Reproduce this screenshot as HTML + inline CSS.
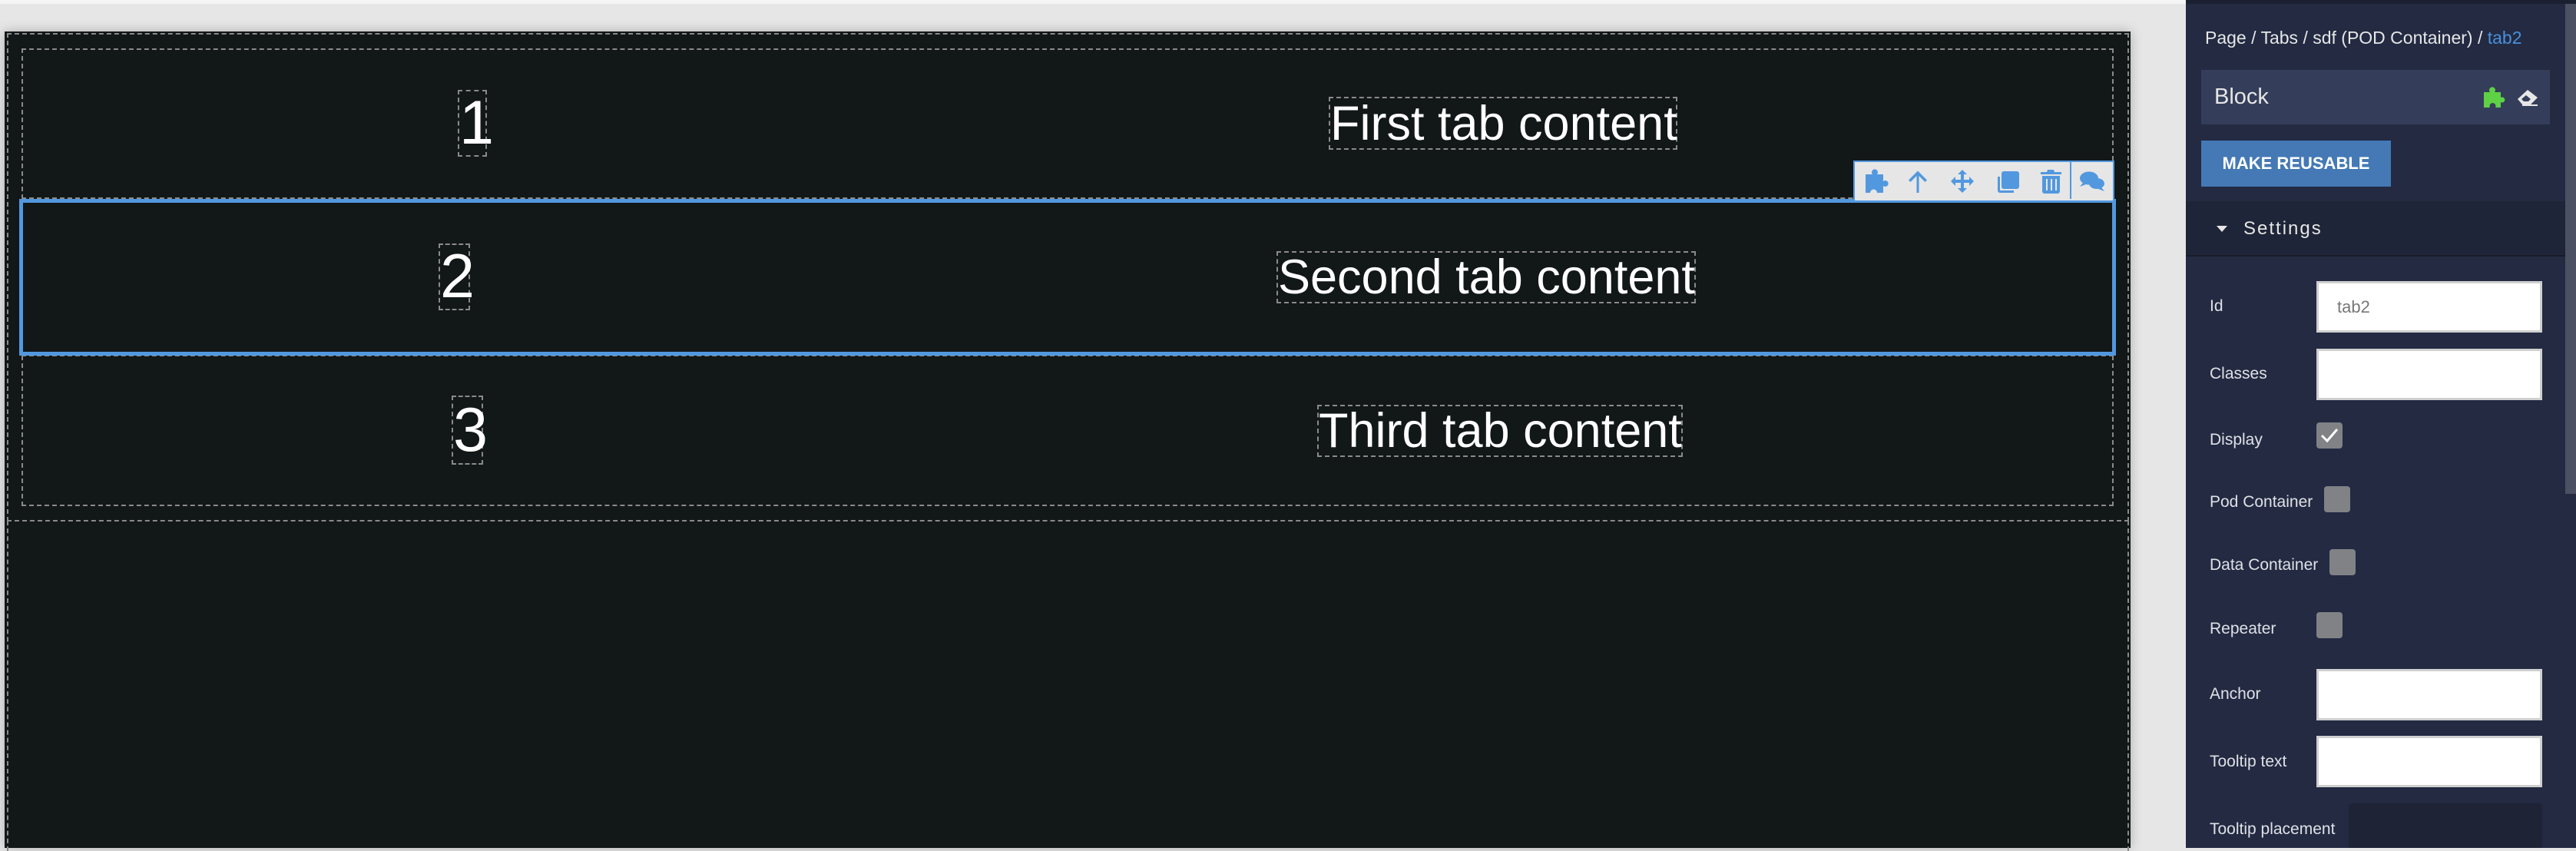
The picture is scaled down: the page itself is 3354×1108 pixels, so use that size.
<!DOCTYPE html>
<html><head><meta charset="utf-8"><style>
*{margin:0;padding:0;box-sizing:border-box}
body{width:3354px;height:1104px;overflow:hidden;background:#e6e6e6;font-family:"Liberation Sans",Arial,sans-serif;position:relative}
.a{position:absolute}
.dash{position:absolute;border:2px dashed #8a8a8a}
.t{position:absolute;color:#fff;border:2px dashed #8a8a8a;white-space:nowrap;text-align:center}
.lbl{position:absolute;left:2877px;color:#dfe1e6;font-size:21px;transform:translateY(-50%)}
.inp{position:absolute;left:3016px;width:294px;height:67px;background:#fff;border:3px solid #cfcfcf}
.cb{position:absolute;width:34px;height:34px;background:#808285;border-radius:4px}
</style></head><body>
<div class="a" style="left:0;top:0;width:2846px;height:5px;background:#f4f4f4"></div>
<!-- canvas -->
<div class="a" style="left:6px;top:41px;width:2768px;height:1063px;background:#121718;box-shadow:0 0 14px rgba(0,0,0,.25)"></div>
<div class="dash" style="left:9px;top:43px;width:2763px;height:636px"></div>
<div class="a" style="left:9px;top:678px;width:0;height:430px;border-left:2px dashed #8a8a8a"></div>
<div class="a" style="left:2770px;top:678px;width:0;height:430px;border-left:2px dashed #8a8a8a"></div>
<div class="dash" style="left:28px;top:63px;width:2724px;height:596px"></div>
<div class="a" style="left:28px;top:257px;width:2724px;border-top:2px dashed #8a8a8a"></div>
<div class="a" style="left:28px;top:462px;width:2724px;border-top:2px dashed #8a8a8a"></div>
<!-- blue selection -->
<div class="a" style="left:25px;top:259px;width:2730px;height:204px;border:5px solid #5298df"></div>
<!-- toolbar -->
<div class="a" style="left:2413px;top:209px;width:340px;height:52px;background:#e6e6e6;border:2px solid #5298df;border-bottom:none"></div>
<div class="a" style="left:2695px;top:209px;width:2px;height:50px;background:#5298df"></div>
<svg class="a" style="left:2425px;top:219px" width="326" height="34" viewBox="0 0 326 34" fill="#5298df">
 <path d="M4 8h9a4 4 0 1 1 6 0h8v9a4 4 0 1 1 0 6v9h-8a4 4 0 1 0-9 0H4z"/>
 <path d="M70.5 32V10l-8 8-2.5-2.5L72 3.5 84 15.5 81.5 18l-8-8v22z"/>
 <path d="M130 2l6 6h-4v7h7v-4l6 6-6 6v-4h-7v7h4l-6 6-6-6h4v-7h-7v4l-6-6 6-6v4h7V8h-4z"/>
 <rect x="181" y="4" width="23" height="23" rx="3"/><path d="M176 11v18a3 3 0 0 0 3 3h18v-3h-18V11z"/>
 <path d="M232 5h8l1-3h8l1 3h9v3h-27z"/><path d="M234 10h23v20a3 3 0 0 1-3 3h-17a3 3 0 0 1-3-3z"/>
 <rect x="239" y="14" width="2" height="15" fill="#e6e6e6"/><rect x="245" y="14" width="2" height="15" fill="#e6e6e6"/><rect x="251" y="14" width="2" height="15" fill="#e6e6e6"/>
 <ellipse cx="295" cy="13" rx="12" ry="8.5"/><path d="M287 19l-4 5 8-3z"/>
 <ellipse cx="305" cy="20" rx="10" ry="7"/><path d="M311 25l4 5-8-3z"/>
</svg>
<!-- texts -->
<div class="t" style="left:596px;top:117px;width:38px;height:87px;font-size:81px;line-height:83px">1</div>
<div class="t" style="left:1730px;top:126px;width:454px;height:69px;font-size:63px;line-height:66px">First tab content</div>
<div class="t" style="left:571px;top:317px;width:41px;height:87px;font-size:81px;line-height:83px">2</div>
<div class="t" style="left:1662px;top:327px;width:546px;height:68px;font-size:63px;line-height:65px">Second tab content</div>
<div class="t" style="left:588px;top:515px;width:41px;height:90px;font-size:81px;line-height:86px">3</div>
<div class="t" style="left:1715px;top:527px;width:476px;height:68px;font-size:63px;line-height:65px">Third tab content</div>
<!-- panel -->
<div class="a" style="left:2846px;top:0;width:508px;height:1104px;background:#232a42"></div>
<div class="a" style="left:2846px;top:0;width:508px;height:5px;background:#1b2030"></div>
<div class="a" style="left:3340px;top:5px;width:14px;height:638px;background:#4b5163"></div>
<div class="a" style="left:2871px;top:36px;font-size:23px;color:#e6e6e6;white-space:nowrap">Page / Tabs / sdf (POD Container) / <span style="color:#4a90d9">tab2</span></div>
<div class="a" style="left:2866px;top:91px;width:454px;height:71px;background:#343e5a"></div>
<div class="a" style="left:2883px;top:110px;font-size:29px;color:#e6e6e6">Block</div>
<svg class="a" style="left:3233px;top:112px" width="34" height="28" viewBox="0 0 34 28" fill="#5ed145"><path d="M1 8h8a4 4 0 1 1 6 0h8v7a3.5 3.5 0 1 1 0 6v7h-7a4 4 0 1 0-7 0H1z"/></svg>
<svg class="a" style="left:3276px;top:114px" width="30" height="26" viewBox="0 0 30 26"><path d="M2 15L15 3l13 10-9 9H8z" fill="#e6e6e6"/><path d="M7 15l6-5 6 5-3 3H10z" fill="#343e5a"/><rect x="8" y="22" width="20" height="2" fill="#e6e6e6"/></svg>
<div class="a" style="left:2866px;top:183px;width:247px;height:60px;background:#4479b5;color:#fff;font-size:22px;font-weight:bold;line-height:60px;text-align:center">MAKE REUSABLE</div>
<div class="a" style="left:2846px;top:262px;width:494px;height:72px;background:#1f2538;border-bottom:2px solid #181c2a"></div>
<svg class="a" style="left:2885px;top:293px" width="16" height="10"><path d="M1 1h14L8 9z" fill="#e6e6e6"/></svg>
<div class="a" style="left:2921px;top:284px;font-size:24px;color:#e6e6e6;letter-spacing:2px">Settings</div>
<div class="lbl" style="top:399px">Id</div>
<div class="inp" style="top:366px;color:#777;font-size:22px;line-height:61px;padding-left:24px">tab2</div>
<div class="lbl" style="top:487px">Classes</div>
<div class="inp" style="top:454px"></div>
<div class="lbl" style="top:573px">Display</div>
<div class="cb" style="left:3016px;top:550px"><svg width="34" height="34"><path d="M7 17l7 7 13-15" stroke="#fff" stroke-width="3" fill="none"/></svg></div>
<div class="lbl" style="top:654px">Pod Container</div>
<div class="cb" style="left:3026px;top:633px"></div>
<div class="lbl" style="top:736px">Data Container</div>
<div class="cb" style="left:3033px;top:715px"></div>
<div class="lbl" style="top:819px">Repeater</div>
<div class="cb" style="left:3016px;top:797px"></div>
<div class="lbl" style="top:904px">Anchor</div>
<div class="inp" style="top:871px"></div>
<div class="lbl" style="top:992px">Tooltip text</div>
<div class="inp" style="top:958px"></div>
<div class="lbl" style="top:1080px">Tooltip placement</div>
<div class="a" style="left:3058px;top:1046px;width:252px;height:58px;background:#1e2336;border-radius:4px 4px 0 0"></div>
</body></html>
